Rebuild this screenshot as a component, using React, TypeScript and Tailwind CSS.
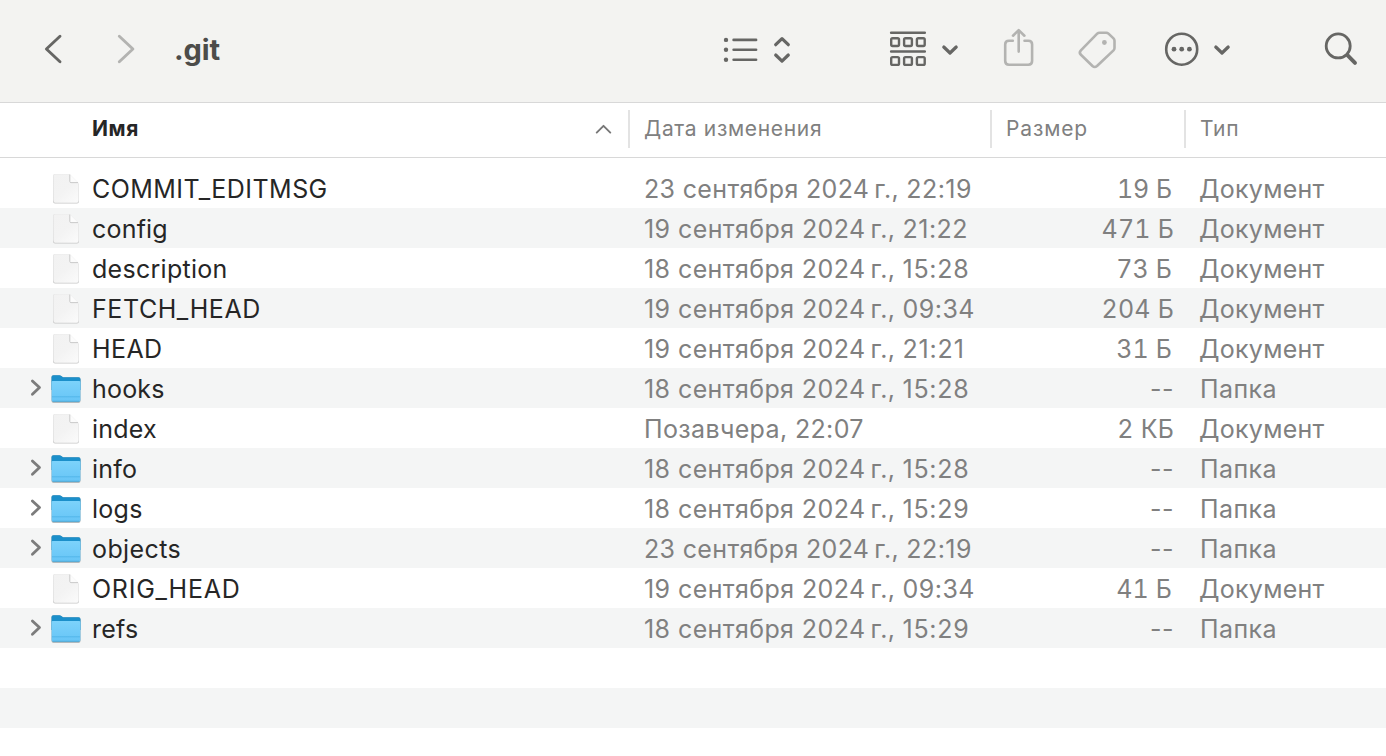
import React from "react";

type Kind = "file" | "folder";

interface Entry {
  name: string;
  nameStyle: string;
  day: string;
  dayStyle: string;
  time: string;
  timeStyle: string;
  size: string;
  sizeStyle: string;
  kind: Kind;
}

const entries: Entry[] = [
  { name: "COMMIT_EDITMSG", nameStyle: "tracking-[0.45px]", day: "23 сентября 2024", dayStyle: "tracking-[0.34px]", time: "22:19", timeStyle: "tracking-[0.45px]", size: "19 Б", sizeStyle: "pr-[2px] tabular-nums tracking-[-0.05px]", kind: "file" },
  { name: "config", nameStyle: "tracking-[0.2px]", day: "19 сентября 2024", dayStyle: "tracking-[0.42px]", time: "21:22", timeStyle: "tracking-[0.45px]", size: "471 Б", sizeStyle: "tabular-nums tracking-[0.2px]", kind: "file" },
  { name: "description", nameStyle: "tracking-[0.28px]", day: "18 сентября 2024", dayStyle: "tracking-[0.42px]", time: "15:28", timeStyle: "tracking-[0.7px]", size: "73 Б", sizeStyle: "pr-[2px] tabular-nums tracking-[0.1px]", kind: "file" },
  { name: "FETCH_HEAD", nameStyle: "tracking-[0.57px]", day: "19 сентября 2024", dayStyle: "tracking-[0.42px]", time: "09:34", timeStyle: "tracking-[0.45px]", size: "204 Б", sizeStyle: "tabular-nums tracking-[0.2px]", kind: "file" },
  { name: "HEAD", nameStyle: "tracking-[0.4px]", day: "19 сентября 2024", dayStyle: "tracking-[0.42px]", time: "21:21", timeStyle: "tracking-[0.8px]", size: "31 Б", sizeStyle: "pr-[2px] tabular-nums tracking-[0.1px]", kind: "file" },
  { name: "hooks", nameStyle: "tracking-[0.2px]", day: "18 сентября 2024", dayStyle: "tracking-[0.42px]", time: "15:28", timeStyle: "tracking-[0.7px]", size: "--", sizeStyle: "tracking-[0.5px]", kind: "folder" },
  { name: "index", nameStyle: "tracking-[0.2px]", day: "Позавчера, 22:07", dayStyle: "tracking-[0.36px]", time: "", timeStyle: "", size: "2 КБ", sizeStyle: "tabular-nums tracking-[0.2px]", kind: "file" },
  { name: "info", nameStyle: "tracking-[0.2px]", day: "18 сентября 2024", dayStyle: "tracking-[0.42px]", time: "15:28", timeStyle: "tracking-[0.7px]", size: "--", sizeStyle: "tracking-[0.5px]", kind: "folder" },
  { name: "logs", nameStyle: "tracking-[0.25px]", day: "18 сентября 2024", dayStyle: "tracking-[0.42px]", time: "15:29", timeStyle: "tracking-[0.7px]", size: "--", sizeStyle: "tracking-[0.5px]", kind: "folder" },
  { name: "objects", nameStyle: "tracking-[0.4px]", day: "23 сентября 2024", dayStyle: "tracking-[0.34px]", time: "22:19", timeStyle: "tracking-[0.45px]", size: "--", sizeStyle: "tracking-[0.5px]", kind: "folder" },
  { name: "ORIG_HEAD", nameStyle: "tracking-[0.75px]", day: "19 сентября 2024", dayStyle: "tracking-[0.42px]", time: "09:34", timeStyle: "tracking-[0.45px]", size: "41 Б", sizeStyle: "pr-[2px] tabular-nums tracking-[0.1px]", kind: "file" },
  { name: "refs", nameStyle: "tracking-[0.25px]", day: "18 сентября 2024", dayStyle: "tracking-[0.42px]", time: "15:29", timeStyle: "tracking-[0.7px]", size: "--", sizeStyle: "tracking-[0.5px]", kind: "folder" },
];

function FileIcon() {
  return (
    <svg width="30" height="34" viewBox="51 171 30 34" fill="none" className="shrink-0">
      <defs>
        <linearGradient id="paper" x1="54" y1="175" x2="78" y2="203" gradientUnits="userSpaceOnUse">
          <stop stopColor="#f2f2f2" />
          <stop offset="0.5" stopColor="#f3f3f3" />
          <stop offset="1" stopColor="#fbfbfb" />
        </linearGradient>
        <linearGradient id="edge" x1="66" y1="174" x2="66" y2="204" gradientUnits="userSpaceOnUse">
          <stop stopColor="#e2e2e2" />
          <stop offset="0.85" stopColor="#dadada" />
          <stop offset="1" stopColor="#c2c2c2" />
        </linearGradient>
      </defs>
      <path d="M55 173.9H69.5L79 183.5V201.3Q79 203.5 77 203.5H55Q53 203.5 53 201.3V175.9Q53 173.9 55 173.9Z" fill="url(#edge)" />
      <path d="M55.3 174.2H69.5L78.5 183.2V200.9Q78.5 202.7 76.8 202.7H55.2Q53.6 202.7 53.6 200.9V176Q53.6 174.2 55.3 174.2Z" fill="url(#paper)" />
      <path d="M69.8 174.5L78.3 183H71Q69.8 183 69.8 181.6Z" fill="#fcfcfc" />
      <path d="M69.8 174.6V181.4Q69.8 182.6 71 182.6H78" stroke="#bcbcbc" strokeWidth="0.8" />
    </svg>
  );
}

function FolderIcon() {
  return (
    <svg width="32" height="34" viewBox="50 371 32 34" fill="none" className="shrink-0">
      <defs>
        <linearGradient id="front" x1="66" y1="380" x2="66" y2="402" gradientUnits="userSpaceOnUse">
          <stop stopColor="#7dd3fb" />
          <stop offset="1" stopColor="#66c4f6" />
        </linearGradient>
      </defs>
      <path d="M51.5 377Q51.5 375.2 53.5 375.2H59.3Q60.4 375.2 61.3 376L63 377.3H78.5Q80.5 377.3 80.5 379.3V400.7Q80.5 402.7 78.7 402.7H53.3Q51.5 402.7 51.5 400.7Z" fill="#9aa5aa" />
      <path d="M51.5 377Q51.5 375.2 53.5 375.2H59.3Q60.4 375.2 61.3 376L63 377.3H78.5Q80.5 377.3 80.5 379.3V390H51.5Z" fill="#1b8fca" />
      <path d="M51.6 382Q51.6 380.9 52.8 380.9H79.2Q80.4 380.9 80.4 382V400Q80.4 401.7 78.7 401.7H53.3Q51.6 401.7 51.6 400Z" fill="url(#front)" />
      <path d="M52 396.8H80" stroke="#4cb1e6" strokeWidth="0.8" />
      <path d="M52.8 401.3H79.2" stroke="#4aa3d0" strokeWidth="0.8" />
    </svg>
  );
}

function Chevron() {
  return (
    <svg width="16" height="24" viewBox="28 376 16 24" fill="none" className="shrink-0">
      <path d="M32.4 380.9L39.5 387.6L32.4 394.3" stroke="#7c7c7c" strokeWidth="2.8" strokeLinecap="round" strokeLinejoin="round" />
    </svg>
  );
}

function Toolbar() {
  return (
    <header className="flex h-[102px] shrink-0 items-start bg-[#f3f3f1] pt-[20px] text-[#666664]">
      <svg width="40" height="60" viewBox="36 20 40 60" fill="none" stroke="currentColor" strokeWidth="2.9" strokeLinecap="round" strokeLinejoin="round" className="ml-[36px] shrink-0">
        <path d="M60 36.2L46.4 49L60 61.8" />
      </svg>
      <svg width="40" height="60" viewBox="106 20 40 60" fill="none" stroke="#b3b3b1" strokeWidth="2.9" strokeLinecap="round" strokeLinejoin="round" className="ml-[30px] shrink-0">
        <path d="M119.3 36.2L132.9 49L119.3 61.8" />
      </svg>
      <h1 className="ml-[28px] h-[60px] w-[546px] text-[29px] leading-[59px] font-bold tracking-[-0.15px] text-[#4c4c4a]">.git</h1>
      <svg width="80" height="60" viewBox="720 20 80 60" fill="none" stroke="currentColor" strokeLinecap="round" strokeLinejoin="round" className="shrink-0">
        <g fill="currentColor" stroke="none">
          <circle cx="726" cy="39.9" r="2.2" />
          <circle cx="726" cy="49.8" r="2.2" />
          <circle cx="726" cy="59.8" r="2.2" />
        </g>
        <path d="M733.6 39.9H756.1M733.6 49.8H756.1M733.6 59.8H756.1" strokeWidth="2.6" />
        <path d="M775.7 44.7L782 38.6L788.3 44.7M775.7 55L782 61.1L788.3 55" strokeWidth="3.2" />
      </svg>
      <svg width="80" height="60" viewBox="885 20 80 60" fill="none" stroke="currentColor" strokeLinecap="round" strokeLinejoin="round" className="ml-[85px] shrink-0">
        <path d="M891.1 32.7H924.8M891.1 51.5H924.8" strokeWidth="2.5" />
        <g strokeWidth="2.4">
          <rect x="891.2" y="38.2" width="7.8" height="7.8" rx="1.4" />
          <rect x="904.1" y="38.2" width="7.8" height="7.8" rx="1.4" />
          <rect x="916.9" y="38.2" width="7.8" height="7.8" rx="1.4" />
          <rect x="891.2" y="57.1" width="7.8" height="7.8" rx="1.4" />
          <rect x="904.1" y="57.1" width="7.8" height="7.8" rx="1.4" />
          <rect x="916.9" y="57.1" width="7.8" height="7.8" rx="1.4" />
        </g>
        <path d="M943.8 47L950 53L956.2 47" strokeWidth="3.2" />
      </svg>
      <svg width="40" height="60" viewBox="999 20 40 60" fill="none" stroke="#b3b3b1" strokeWidth="2.6" strokeLinecap="round" strokeLinejoin="round" className="ml-[34px] shrink-0">
        <path d="M1012.8 40.7H1009Q1005.2 40.7 1005.2 44.4V61Q1005.2 64.7 1009 64.7H1028.3Q1032.1 64.7 1032.1 61V44.4Q1032.1 40.7 1028.3 40.7H1024.5" />
        <path d="M1018.7 51.6V30.8M1013 35.7L1018.7 30.1L1024.4 35.7" />
      </svg>
      <svg width="50" height="60" viewBox="1073 20 50 60" fill="none" stroke="#b3b3b1" strokeWidth="2.6" strokeLinecap="round" strokeLinejoin="round" className="ml-[34px] shrink-0">
        <path d="M1099.6 32.7H1106.2Q1107.5 32.7 1108.5 33.6L1113.5 38.4Q1114.5 39.4 1114.5 40.8V48Q1114.5 49.4 1113.5 50.4L1097 66Q1094.7 68 1092.5 66L1080.9 54.8Q1078.7 52.6 1080.9 50.3L1097.2 33.7Q1098.2 32.7 1099.6 32.7Z" />
        <circle cx="1104.4" cy="42.5" r="2.4" fill="#b3b3b1" stroke="none" />
      </svg>
      <svg width="80" height="60" viewBox="1160 20 80 60" fill="none" stroke="currentColor" strokeLinecap="round" strokeLinejoin="round" className="ml-[37px] shrink-0">
        <circle cx="1181.7" cy="49.2" r="15.5" strokeWidth="2.6" />
        <g fill="currentColor" stroke="none">
          <circle cx="1174" cy="49.2" r="2.4" />
          <circle cx="1181.7" cy="49.2" r="2.4" />
          <circle cx="1189.4" cy="49.2" r="2.4" />
        </g>
        <path d="M1215.8 47L1222 53L1228.2 47" strokeWidth="3.2" />
      </svg>
      <svg width="50" height="60" viewBox="1315 20 50 60" fill="none" stroke="currentColor" strokeLinecap="round" className="ml-[75px] shrink-0">
        <circle cx="1338.2" cy="45.9" r="12" strokeWidth="2.8" />
        <path d="M1347.4 55.1L1355 62.9" strokeWidth="3.9" />
      </svg>
    </header>
  );
}

function ColumnHeader() {
  return (
    <div className="flex h-[56px] shrink-0 items-start border-t border-b border-[#d8d8d8] pt-[7px] text-[21px] leading-[38px] text-[#808080]">
      <div className="flex w-[628px] shrink-0 items-center justify-between pr-[15px] pl-[92px]">
        <span className="font-bold tracking-[0.6px] text-[#262626]">Имя</span>
        <svg width="20" height="20" viewBox="593 120 20 20" fill="none">
          <path d="M596.7 133.6L603.5 126.8L610.3 133.6" stroke="#777777" strokeWidth="1.9" strokeLinecap="round" strokeLinejoin="round" />
        </svg>
      </div>
      <div className="w-[362px] shrink-0 border-l-2 border-[#e3e3e3] pl-[14px] tracking-[0.67px]">Дата изменения</div>
      <div className="w-[194px] shrink-0 border-l-2 border-[#e3e3e3] pl-[14px] tracking-[0.85px]">Размер</div>
      <div className="grow border-l-2 border-[#e3e3e3] pl-[14px] tracking-[0.7px]">Тип</div>
    </div>
  );
}

function Row({ entry }: { entry: Entry }) {
  const isFolder = entry.kind === "folder";
  return (
    <li className="flex h-[40px] items-center whitespace-pre text-[25px] leading-[40px] text-[#808080] even:bg-[#f4f5f5]">
      <div className="flex w-[644px] shrink-0 items-center text-[#262626]">
        <div className="flex w-[50px] shrink-0 pl-[28px]">{isFolder && <Chevron />}</div>
        <div className="flex w-[42px] shrink-0">
          {isFolder ? <FolderIcon /> : <div className="pl-[1px]"><FileIcon /></div>}
        </div>
        <div className="pt-[2px]">
          <span className={entry.nameStyle}>{entry.name}</span>
        </div>
      </div>
      <div className="w-[362px] shrink-0 pt-[2px]">
        <span className={entry.dayStyle}>{entry.day}</span>
        {entry.time && (
          <>
            <span className="ml-[5px] tracking-[0.3px]">г., </span>
            <span className={entry.timeStyle}>{entry.time}</span>
          </>
        )}
      </div>
      <div className="w-[168px] shrink-0 pt-[2px] text-right">
        <span className={entry.sizeStyle}>{entry.size}</span>
      </div>
      <div className={isFolder ? "pt-[2px] pl-[26px] tracking-[0.4px]" : "pt-[2px] pl-[25px] tracking-[0.27px]"}>
        {isFolder ? "Папка" : "Документ"}
      </div>
    </li>
  );
}

export default function App() {
  return (
    <div className="flex h-[756px] w-[1386px] flex-col overflow-hidden bg-white font-['Inter','Liberation_Sans',sans-serif]">
      <Toolbar />
      <ColumnHeader />
      <ul className="pt-[10px]">
        {entries.map((entry) => (
          <Row key={entry.name} entry={entry} />
        ))}
        <li className="h-[40px]" />
        <li className="h-[40px] bg-[#f4f5f5]" />
      </ul>
    </div>
  );
}
